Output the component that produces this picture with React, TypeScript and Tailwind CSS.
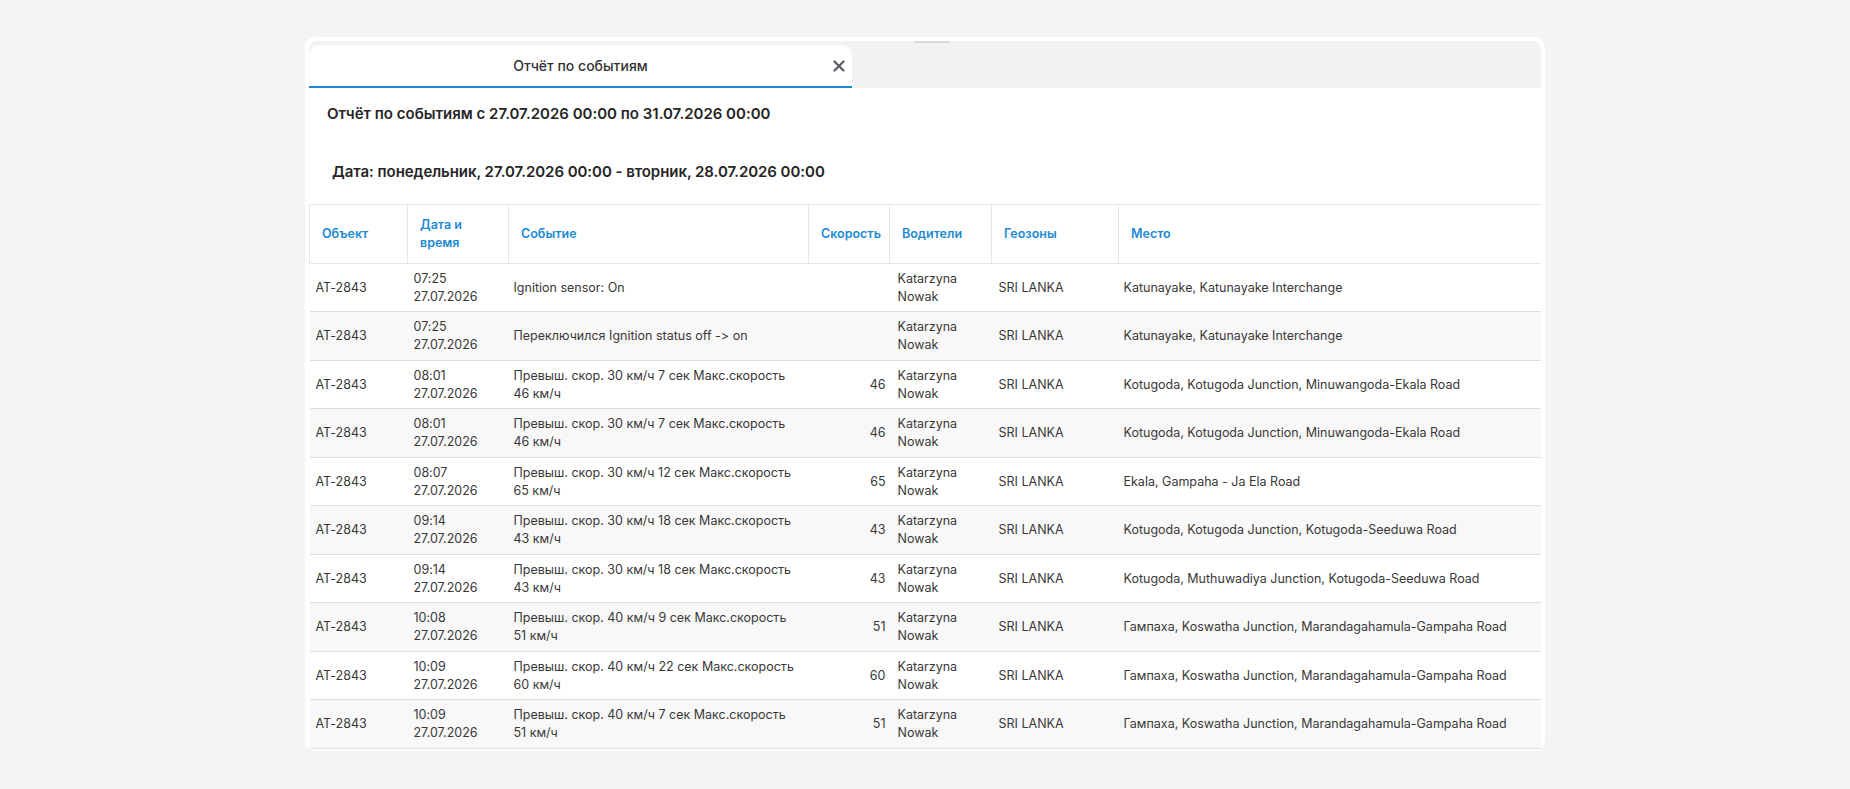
import React from "react";

type Row = {
  obj: string;
  time: string;
  date: string;
  event: string[];
  speed?: string;
  driver: string[];
  zone: string;
  place: string;
};

const rows: Row[] = [
  {
    obj: "AT-2843",
    time: "07:25",
    date: "27.07.2026",
    event: ["Ignition sensor: On"],
    driver: ["Katarzyna", "Nowak"],
    zone: "SRI LANKA",
    place: "Katunayake, Katunayake Interchange",
  },
  {
    obj: "AT-2843",
    time: "07:25",
    date: "27.07.2026",
    event: ["Переключился Ignition status off -> on"],
    driver: ["Katarzyna", "Nowak"],
    zone: "SRI LANKA",
    place: "Katunayake, Katunayake Interchange",
  },
  {
    obj: "AT-2843",
    time: "08:01",
    date: "27.07.2026",
    event: ["Превыш. скор. 30 км/ч 7 сек Макс.скорость", "46 км/ч"],
    speed: "46",
    driver: ["Katarzyna", "Nowak"],
    zone: "SRI LANKA",
    place: "Kotugoda, Kotugoda Junction, Minuwangoda-Ekala Road",
  },
  {
    obj: "AT-2843",
    time: "08:01",
    date: "27.07.2026",
    event: ["Превыш. скор. 30 км/ч 7 сек Макс.скорость", "46 км/ч"],
    speed: "46",
    driver: ["Katarzyna", "Nowak"],
    zone: "SRI LANKA",
    place: "Kotugoda, Kotugoda Junction, Minuwangoda-Ekala Road",
  },
  {
    obj: "AT-2843",
    time: "08:07",
    date: "27.07.2026",
    event: ["Превыш. скор. 30 км/ч 12 сек Макс.скорость", "65 км/ч"],
    speed: "65",
    driver: ["Katarzyna", "Nowak"],
    zone: "SRI LANKA",
    place: "Ekala, Gampaha - Ja Ela Road",
  },
  {
    obj: "AT-2843",
    time: "09:14",
    date: "27.07.2026",
    event: ["Превыш. скор. 30 км/ч 18 сек Макс.скорость", "43 км/ч"],
    speed: "43",
    driver: ["Katarzyna", "Nowak"],
    zone: "SRI LANKA",
    place: "Kotugoda, Kotugoda Junction, Kotugoda-Seeduwa Road",
  },
  {
    obj: "AT-2843",
    time: "09:14",
    date: "27.07.2026",
    event: ["Превыш. скор. 30 км/ч 18 сек Макс.скорость", "43 км/ч"],
    speed: "43",
    driver: ["Katarzyna", "Nowak"],
    zone: "SRI LANKA",
    place: "Kotugoda, Muthuwadiya Junction, Kotugoda-Seeduwa Road",
  },
  {
    obj: "AT-2843",
    time: "10:08",
    date: "27.07.2026",
    event: ["Превыш. скор. 40 км/ч 9 сек Макс.скорость", "51 км/ч"],
    speed: "51",
    driver: ["Katarzyna", "Nowak"],
    zone: "SRI LANKA",
    place: "Гампаха, Koswatha Junction, Marandagahamula-Gampaha Road",
  },
  {
    obj: "AT-2843",
    time: "10:09",
    date: "27.07.2026",
    event: ["Превыш. скор. 40 км/ч 22 сек Макс.скорость", "60 км/ч"],
    speed: "60",
    driver: ["Katarzyna", "Nowak"],
    zone: "SRI LANKA",
    place: "Гампаха, Koswatha Junction, Marandagahamula-Gampaha Road",
  },
  {
    obj: "AT-2843",
    time: "10:09",
    date: "27.07.2026",
    event: ["Превыш. скор. 40 км/ч 7 сек Макс.скорость", "51 км/ч"],
    speed: "51",
    driver: ["Katarzyna", "Nowak"],
    zone: "SRI LANKA",
    place: "Гампаха, Koswatha Junction, Marandagahamula-Gampaha Road",
  },
];

const headers = [
  { label: ["Объект"], w: "w-[98px]" },
  { label: ["Дата и", "время"], w: "w-[101px]" },
  { label: ["Событие"], w: "w-[300px]" },
  { label: ["Скорость"], w: "w-[81px]" },
  { label: ["Водители"], w: "w-[102px]" },
  { label: ["Геозоны"], w: "w-[127px]" },
  { label: ["Место"], w: "w-[422px]" },
];

function Lines({ items }: { items: string[] }) {
  return (
    <>
      {items.map((t, i) => (
        <div key={i} className="whitespace-nowrap">
          {t}
        </div>
      ))}
    </>
  );
}

export default function App() {
  return (
    <div className="min-h-screen bg-[#f4f4f4] pt-[37px] font-['Inter',sans-serif] [font-feature-settings:'calt'_0]">
      <div className="mx-auto h-[714px] w-[1240px] overflow-hidden rounded-[10px] bg-white px-[4px] pt-[4px]">
        {/* tab strip */}
        <div className="relative flex h-[47px] items-end rounded-t-[8px] bg-[#f2f2f2]">
          <div className="absolute left-[605px] top-0 h-[2px] w-[36px] rounded-full bg-[#d6d6dd]" />
          <div className="relative flex h-[43px] w-[543px] items-center justify-center rounded-t-[10px] border-b-2 border-[#1b8ad3] bg-white">
            <span className="text-[14px] font-medium text-[#333]">Отчёт по событиям</span>
            <svg
              className="absolute right-[7px] top-[15px]"
              width="12"
              height="12"
              viewBox="0 0 12 12"
            >
              <path d="M1.5 1.5 L10.5 10.5 M10.5 1.5 L1.5 10.5" stroke="#5b5b66" strokeWidth="2.2" strokeLinecap="round" />
            </svg>
          </div>
        </div>

        <div className="pl-[18px] pt-[16px] text-[15px] font-semibold leading-[20px] text-[#252525]">
          Отчёт по событиям с 27.07.2026 00:00 по 31.07.2026 00:00
        </div>
        <div className="pl-[23px] pt-[38px] text-[15px] font-semibold leading-[20px] tracking-[-0.05px] text-[#252525]">
          Дата: понедельник, 27.07.2026 00:00 - вторник, 28.07.2026 00:00
        </div>

        <table className="mt-[22px] w-[1231px] table-fixed border-collapse text-[12.5px] leading-[18px] text-[#383838]">
          <thead>
            <tr className="border-t border-b border-[#e6e6e6]">
              {headers.map((h, i) => (
                <th
                  key={i}
                  className={`${h.w} h-[59px] border-l border-[#e6e6e6] px-[12px] text-left align-middle font-semibold text-[#1b8ad3]`}
                >
                  <Lines items={h.label} />
                </th>
              ))}
            </tr>
          </thead>
          <tbody>
            {rows.map((r, i) => (
              <tr
                key={i}
                className={`border-b border-[#dedede] ${i % 2 === 1 ? "h-[49px] bg-[#f8f8f8]" : "h-[48px] bg-white"}`}
              >
                <td className="px-[6px] align-middle">{r.obj}</td>
                <td className="px-[6px] align-middle">
                  <Lines items={[r.time, r.date]} />
                </td>
                <td className="px-[5px] align-middle">
                  <Lines items={r.event} />
                </td>
                <td className="pr-[4px] text-right align-middle">{r.speed ?? ""}</td>
                <td className="px-[8px] align-middle">
                  <Lines items={r.driver} />
                </td>
                <td className="px-[7px] align-middle">{r.zone}</td>
                <td className="px-[5px] align-middle">{r.place}</td>
              </tr>
            ))}
          </tbody>
        </table>
      </div>
    </div>
  );
}
